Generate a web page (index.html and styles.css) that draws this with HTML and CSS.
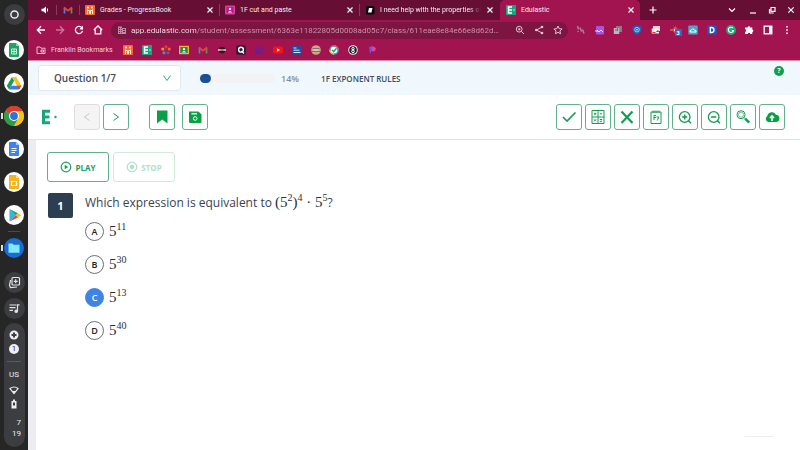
FILE: index.html
```html
<!DOCTYPE html>
<html lang="en">
<head>
<meta charset="utf-8">
<title>Edulastic</title>
<link rel="stylesheet" href="styles.css">
</head>
<body>
<aside class="shelf">
  <button class="launcher" aria-label="Launcher"><svg viewBox="0 0 21 21"><circle cx="10.500" cy="10.500" r="3.600" fill="none" stroke="#eee" stroke-width="1.500"/></svg></button>
  <nav class="apps">
    <a href="#" class="app" aria-label="Sheets"><svg viewBox="0 0 20 20"><circle cx="10" cy="10" r="10" fill="#fff"/><path d="M6 3h6l3 3v10a1 1 0 0 1-1 1H6a1 1 0 0 1-1-1V4a1 1 0 0 1 1-1z" fill="#1da362"/><path d="M12 3l3 3h-3z" fill="#8ed1b1"/><path d="M7.500 9h5v5h-5zM7.500 11.500h5M10 9v5" fill="none" stroke="#d9f2e5"/></svg></a>
    <a href="#" class="app" aria-label="Drive"><svg viewBox="0 0 20 20"><circle cx="10" cy="10" r="10" fill="#fff"/><path d="M8 4l2.200 3.800L5 16.500 2.800 12.800z" fill="#12a15c"/><path d="M8 4h4.300l5 8.700H13z" fill="#fbc116"/><path d="M7.200 12.700h10.100L15 16.500H5z" fill="#3c7bea"/><path d="M13 12.700h4.300L15 16.500z" fill="#e74335"/></svg></a>
    <a href="#" class="app running" aria-label="Chrome"><svg viewBox="0 0 20 20"><circle cx="10" cy="10" r="10" fill="#fbc116"/><path d="M10 10L1.340 5A10 10 0 0 1 18.660 5z" fill="#e33b2e"/><path d="M10 10L1.340 5A10 10 0 0 0 10 20l4-7z" fill="#2a9d4e"/><path d="M10 5h8.660A10 10 0 0 1 10 20l4.300-7.500z" fill="#fbc116"/><circle cx="10" cy="10" r="5" fill="#fff"/><circle cx="10" cy="10" r="3.900" fill="#2f73dc"/></svg></a>
    <a href="#" class="app" aria-label="Docs"><svg viewBox="0 0 20 20"><circle cx="10" cy="10" r="10" fill="#fff"/><path d="M6 3h6l3 3v10a1 1 0 0 1-1 1H6a1 1 0 0 1-1-1V4a1 1 0 0 1 1-1z" fill="#4081ec"/><path d="M12 3l3 3h-3z" fill="#a6c5f8"/><path d="M7.500 9.500h5M7.500 11.500h5M7.500 13.500h3.500" stroke="#fff"/></svg></a>
    <a href="#" class="app" aria-label="Slides"><svg viewBox="0 0 20 20"><circle cx="10" cy="10" r="10" fill="#fff"/><path d="M6 3h6l3 3v10a1 1 0 0 1-1 1H6a1 1 0 0 1-1-1V4a1 1 0 0 1 1-1z" fill="#f2b51b"/><path d="M12 3l3 3h-3z" fill="#fae09a"/><path d="M7.500 9.500h5v4h-5z" fill="none" stroke="#fff" stroke-width="1.200"/></svg></a>
    <a href="#" class="app" aria-label="Play Store"><svg viewBox="0 0 20 20"><circle cx="10" cy="10" r="10" fill="#fff"/><path d="M5.500 4v12.500l6.200-6.200z" fill="#25b8e8"/><path d="M5.500 4l8.500 4.200-2.300 2.100z" fill="#20a565"/><path d="M14 8.200l3.300 2.100-3.300 2.200-2.300-2.200z" fill="#fbc116"/><path d="M5.500 16.500l8.500-4-2.300-2.200z" fill="#e74335"/></svg></a>
    <hr>
    <a href="#" class="app running" aria-label="Files"><svg viewBox="0 0 20 20"><circle cx="10" cy="10" r="10" fill="#1c6ad4"/><path d="M4.500 5.500h4l1.200 1.300h5.800v8h-11z" fill="#7eeafc"/></svg></a>
  </nav>
  <div class="trays">
    <button class="tray" aria-label="Screen captures"><svg viewBox="0 0 21 21" fill="none" stroke="#e4e4e4" stroke-width="1.200"><rect x="8" y="5.500" width="7.500" height="7.500" rx="1"/><path d="M11.700 7.300v4M9.700 9.300h4M6.500 8l-1 5.500 1 2 6.500-.5"/></svg></button>
    <button class="tray" aria-label="Media controls"><svg viewBox="0 0 21 21" fill="none" stroke="#e4e4e4" stroke-width="1.200"><path d="M5.500 7h7M5.500 9.700h6M5.500 12.400h3.500M13.500 13V6.800h2"/><circle cx="12.200" cy="13.200" r="1.200" fill="#e4e4e4"/></svg></button>
  </div>
  <section class="status">
    <svg class="dot" viewBox="0 0 10 10"><circle cx="5" cy="5" r="4.500" fill="#eee"/><path d="M5 2.500v5M2.500 5h5" stroke="#3c3d40" stroke-width="2"/></svg>
    <span class="count">1</span>
    <hr>
    <span class="lang">US</span>
    <svg class="dot" viewBox="0 0 10 10"><path d="M1 3.500q4-3 8 0L5 8.500z" fill="none" stroke="#eee" stroke-width="1.200"/><path d="M3 6h4L5 8.500z" fill="#eee"/></svg>
    <svg class="dot battery" viewBox="0 0 10 10"><path d="M4 .5h2V2h1.500v7.500h-5V2H4z" fill="#eee"/><path d="M4 3.500h2v3H4z" fill="#3c3d40"/></svg>
    <time class="clock"><span>7</span><span>19</span></time>
  </section>
</aside>

<div class="browser">
  <header class="tabs">
    <div class="pinned"><svg class="i10" viewBox="0 0 10 10"><path d="M1.500 3.700h1.700L6 1.500v7L3.200 6.300H1.500z" fill="#fff"/><path d="M7.500 3.500v3" stroke="#fff"/></svg></div>
    <div class="pinned"><svg class="i10" viewBox="0 0 10 10"><path d="M1.500 8.500v-6" stroke="#4285f4" stroke-width="1.700"/><path d="M8.500 8.500v-6" stroke="#34a853" stroke-width="1.700"/><path d="M1 2.500l4 3.200 4-3.200" fill="none" stroke="#ea4335" stroke-width="1.800"/></svg></div>
    <div class="tab"><svg class="i10" viewBox="0 0 10 10"><rect width="10" height="10" rx="1" fill="#f26b2b"/><path d="M2.500 4.500V9M7.500 4.500V9M2 5.500h2.500V9M8 5.500H5.500V9" fill="none" stroke="#ffe9da"/><circle cx="3" cy="2.500" r="1" fill="#fff"/><circle cx="7" cy="2.500" r="1" fill="#fff"/></svg><a href="#">Grades - ProgressBook</a><button class="x" aria-label="Close tab"><svg viewBox="0 0 8 8"><path d="M1.500 1.500l5 5M6.500 1.500l-5 5"/></svg></button></div>
    <div class="tab"><svg class="i10" viewBox="0 0 10 10"><rect y=".5" width="10" height="9" rx="1" fill="#e23ba5"/><rect x="1.500" y="2" width="7" height="6" fill="#b91c7f"/><circle cx="5" cy="4" r="1.200" fill="#fff"/><path d="M2.700 7.500q2.300-3 4.600 0z" fill="#fff"/></svg><a href="#">1F cut and paste</a><button class="x" aria-label="Close tab"><svg viewBox="0 0 8 8"><path d="M1.500 1.500l5 5M6.500 1.500l-5 5"/></svg></button></div>
    <div class="tab"><svg class="i10" viewBox="0 0 10 10"><rect x="1" y="1" width="8.500" height="8.500" rx="1.500" fill="#080808"/><path d="M4 3h3.500l-1 4.500H3z" fill="#fff"/></svg><a href="#" class="fade">I need help with the properties of</a><button class="x" aria-label="Close tab"><svg viewBox="0 0 8 8"><path d="M1.500 1.500l5 5M6.500 1.500l-5 5"/></svg></button></div>
    <div class="tab active"><svg class="i10" viewBox="0 0 10 10"><rect width="10" height="10" fill="#19a57b"/><path d="M6 2H2.500v6H6M2.500 5H6" fill="none" stroke="#fff" stroke-width="1.500"/><circle cx="8" cy="5" r=".7" fill="#fff"/></svg><a href="#">Edulastic</a><button class="x" aria-label="Close tab"><svg viewBox="0 0 8 8"><path d="M1.500 1.500l5 5M6.500 1.500l-5 5"/></svg></button></div>
    <button class="new" aria-label="New tab"><svg viewBox="0 0 10 10"><path d="M5 1.500v7M1.500 5h7"/></svg></button>
    <div class="window">
      <button aria-label="Search tabs"><svg viewBox="0 0 10 10"><path d="M2 3.500l3 3 3-3"/></svg></button>
      <button aria-label="Minimize"><svg viewBox="0 0 10 10"><path d="M2 8h6"/></svg></button>
      <button aria-label="Restore"><svg viewBox="0 0 10 10"><path d="M2.500 4v4h4.200M4 2.500h4v3.800H4z"/></svg></button>
      <button aria-label="Close"><svg viewBox="0 0 10 10"><path d="M2.300 2.300l5.400 5.400M7.700 2.300L2.300 7.700"/></svg></button>
    </div>
  </header>

  <div class="bar">
    <nav class="nav">
      <button aria-label="Back"><svg viewBox="0 0 10 10"><path d="M9 5H1.500M5 1.300L1.300 5 5 8.700"/></svg></button>
      <button class="dim" aria-label="Forward"><svg viewBox="0 0 10 10"><path d="M1 5h7.500M5 1.300L8.700 5 5 8.700"/></svg></button>
      <button aria-label="Reload"><svg viewBox="0 0 10 10"><path d="M8 3a3.600 3.600 0 1 0 .5 2.800"/><path d="M9 .8v3.700H5.300z" fill="#fff" stroke="none"/></svg></button>
      <button aria-label="Home"><svg viewBox="0 0 10 10"><path d="M.8 5L5 1l4.200 4M2.200 4.500v4.400h5.600V4.500"/></svg></button>
    </nav>
    <div class="omnibox">
      <svg class="i10" viewBox="0 0 10 10" fill="#c08aa2"><path d="M1 1.500h4V3h4v6H1zM2 3v1h1V3zm0 2v1h1V5zm0 2v1h1V7zm2-4v1h.7V3zm0 2v1h.7V5zm0 2v1h.7V7zm2-3v1h2V4zm0 2v1h2V6z" fill-rule="evenodd"/></svg>
      <input type="text" aria-label="Address" value="app.edulastic.com/student/assessment/6363e11822805d0008ad05c7/class/611eae8e84e66e8d62d…">
      <div class="page-actions">
        <button aria-label="Zoom"><svg viewBox="0 0 10 10"><circle cx="4.200" cy="4.200" r="2.900"/><path d="M6.400 6.400L9 9M4.200 3v2.400M3 4.200h2.400"/></svg></button>
        <button aria-label="Share"><svg viewBox="0 0 10 10"><path d="M8 2L2.500 5 8 8"/><g fill="#e5c3d0" stroke="none"><circle cx="8" cy="2" r="1.300"/><circle cx="2.300" cy="5" r="1.300"/><circle cx="8" cy="8" r="1.300"/></g></svg></button>
        <button aria-label="Bookmark"><svg viewBox="0 0 10 10"><path d="M5 1l1.200 2.700 2.900.3-2.200 1.900.7 2.900L5 7.300 2.400 8.800l.7-2.900L.9 4l2.900-.3z"/></svg></button>
      </div>
    </div>
    <div class="extensions">
      <svg class="i10" viewBox="0 0 10 10"><path d="M1.500 1l1 3.500M4 2.500l1.500 4M6.500 4.500L8 8.500M1.800 6l.5 1" fill="none" stroke="#a88698" stroke-width="1.500"/></svg>
      <svg class="i10" viewBox="0 0 10 10"><rect x="1" y="1" width="8" height="8.500" rx="1" fill="#a257e3"/><path d="M0 6h3M2 5l2 2 2-2 2 2" fill="none" stroke="#efd9ff"/></svg>
      <svg class="i10" viewBox="0 0 10 10"><path d="M3 1h6v6H3z" fill="#8a7c86"/><path d="M.8 3h5.500v6H.8z" fill="#bdb5bb"/><path d="M2 5h3M4.500 3v3" stroke="#756974"/></svg>
      <svg class="i10" viewBox="0 0 10 10"><path d="M5 .3l4.500 1.500v3Q9 8.500 5 9.800 1 8.500.5 4.800v-3z" fill="#1f5fb4"/><circle cx="5" cy="4.700" r="2.300" fill="none" stroke="#9dccff"/><circle cx="5" cy="4.700" r=".8" fill="#fff"/></svg>
      <svg class="i10" viewBox="0 0 10 10"><path d="M2 1h7v5H2z" fill="#e7d8d2"/><path d="M.7 3.500H8v5H.7z" fill="#f5eeea"/><path d="M1.500 7.500h3" stroke="#d33"/><path d="M5 7l2-2 1 2" fill="#4b4451"/></svg>
      <span class="ext-badge"><svg class="i10" viewBox="0 0 10 10"><path d="M0 4h3l2-3 4 4-4 4-2-3H0z" fill="#e84545"/><path d="M4 3.500l2 1.500-2 1.500z" fill="#fff"/></svg><b>3</b></span>
      <svg class="i10" viewBox="0 0 10 10"><rect x=".3" y=".5" width="9.400" height="9" rx="1" fill="#48a9c5"/><path d="M2 7q-.5-2 1.500-2 1-2.500 3 0Q8.500 5 8 7z" fill="none" stroke="#fff"/></svg>
      <svg class="i10" viewBox="0 0 10 10"><rect x=".3" y=".5" width="9.400" height="9" rx="1" fill="#2055bf"/><path d="M3.300 2.500h1.200a2.500 2.500 0 0 1 0 5H3.300z" fill="none" stroke="#fff" stroke-width="1.300"/></svg>
      <svg class="i10" viewBox="0 0 10 10"><circle cx="5" cy="5" r="4.900" fill="#15b378"/><path d="M7 3.200a2.600 2.600 0 1 0 .5 2.300H5.700" fill="none" stroke="#fff" stroke-width="1.100"/></svg>
      <svg class="i10" viewBox="0 0 10 10"><path d="M1 2.500h2.700a1.300 1.300 0 1 1 2.600 0h2v2a1.400 1.400 0 0 1 0 2.700V9H6.300a1.200 1.200 0 0 0-2.400 0H1V6.700a1.200 1.200 0 0 0 0-2.400z" fill="#fff"/></svg>
      <svg class="i10" viewBox="0 0 10 10"><rect x="1.200" y="1.200" width="7.600" height="7.600" fill="none" stroke="#fff" stroke-width="1.300"/><path d="M6 1h3v8H6z" fill="#fff"/></svg>
      <svg class="i10" viewBox="0 0 10 10" fill="#f2dbe4"><circle cx="5" cy="1.700" r="1"/><circle cx="5" cy="5" r="1"/><circle cx="5" cy="8.300" r="1"/></svg>
    </div>
  </div>

  <nav class="bookmarks">
    <a href="#" class="folder"><svg class="i10" viewBox="0 0 10 10" fill="none" stroke="#e8c3d1"><path d="M1 2h3l1 1.200h4v5.300H1z"/><path d="M5 5h2.500v2H5z"/></svg>Franklin Bookmarks</a>
    <div class="marks">
      <svg class="i10" viewBox="0 0 10 10"><rect width="10" height="10" rx="1" fill="#f26b2b"/><path d="M2.500 4.500V9M7.500 4.500V9M2 5.500h2.500V9M8 5.500H5.500V9" fill="none" stroke="#ffe9da"/><circle cx="3" cy="2.500" r="1" fill="#fff"/><circle cx="7" cy="2.500" r="1" fill="#fff"/></svg>
      <svg class="i10" viewBox="0 0 10 10"><rect width="10" height="10" fill="#19a57b"/><path d="M6 2H2.500v6H6M2.500 5H6" fill="none" stroke="#fff" stroke-width="1.500"/><circle cx="8" cy="5" r=".7" fill="#fff"/></svg>
      <svg class="i10" viewBox="0 0 10 10"><circle cx="5" cy="1.800" r="1.600" fill="#e63b2d"/><circle cx="1.800" cy="4" r="1.600" fill="#f39a1e"/><circle cx="8.200" cy="4" r="1.600" fill="#ef6b29"/><circle cx="3" cy="7.800" r="1.600" fill="#4c8bd8"/><circle cx="7" cy="7.800" r="1.600" fill="#70579f"/><circle cx="5" cy="5" r="1.200" fill="#8d3158"/></svg>
      <svg class="i10" viewBox="0 0 10 10"><rect y=".8" width="10" height="8.400" fill="#f2b51b"/><rect x="1.300" y="2" width="7.400" height="6" fill="#23895a"/><circle cx="5" cy="4.200" r="1.100" fill="#fff"/><path d="M2.800 7.500q2.200-3 4.400 0z" fill="#fff"/></svg>
      <svg class="i10" viewBox="0 0 10 10"><path d="M1.500 8.500v-6" stroke="#4285f4" stroke-width="1.700"/><path d="M8.500 8.500v-6" stroke="#34a853" stroke-width="1.700"/><path d="M1 2.500l4 3.200 4-3.200" fill="none" stroke="#ea4335" stroke-width="1.800"/></svg>
      <svg class="i10" viewBox="0 0 10 10"><circle cx="5" cy="5" r="3.300" fill="#241b20"/><path d="M1 5h8" stroke="#ead6dc" stroke-width="1.500"/><path d="M3.500 5h3" stroke="#d94c3d" stroke-width="1.500"/></svg>
      <svg class="i10" viewBox="0 0 10 10"><rect x=".3" y=".3" width="9.400" height="9.400" rx="1.500" fill="#2d1735"/><circle cx="5" cy="4.700" r="2.400" fill="none" stroke="#fff" stroke-width="1.400"/><path d="M5.500 6l2.500 2.500" stroke="#fff" stroke-width="1.200"/></svg>
      <svg class="i10" viewBox="0 0 10 10"><path d="M1.800 1.500v7.500M5.800 3.500L2.500 6 6 9M8.500 1.500L8 6.700M7.600 7.700v1.500" fill="none" stroke="#5c1fae" stroke-width="1.700"/></svg>
      <svg class="i10" viewBox="0 0 10 10"><rect y="1.500" width="10" height="7" rx="2" fill="#f41414"/><path d="M4 3.300L7 5 4 6.700z" fill="#fff"/></svg>
      <svg class="i10" viewBox="0 0 10 10"><path d="M.3.300h9.400v9.400H.3z" fill="#174ea6"/><path d="M1.500 3h3M1.500 5.200h6M1.500 7.500h7" stroke="#d7e4ff"/></svg>
      <svg class="i10" viewBox="0 0 10 10"><circle cx="5" cy="5" r="4.800" fill="#c9a884"/><path d="M1.500 3.500h7M1 6.500h8" stroke="#806d76"/><path d="M2.500 5h5" stroke="#efe1c7"/></svg>
      <svg class="i10" viewBox="0 0 10 10"><circle cx="5" cy="5" r="4" fill="#fff" stroke="#36a9d9" stroke-width="1.500"/><path d="M5 1a4 4 0 0 1 4 4" fill="none" stroke="#ef6548" stroke-width="1.500"/><path d="M1 5a4 4 0 0 0 4 4" fill="none" stroke="#f4bd35" stroke-width="1.500"/><path d="M3 5l1.700 1.600L7.500 3.300" fill="none" stroke="#23a867" stroke-width="1.500"/></svg>
      <svg class="i10" viewBox="0 0 10 10"><circle cx="5" cy="5" r="4.800" fill="#eee"/><circle cx="5" cy="5" r="3.800" fill="#222"/><circle cx="5" cy="3.700" r="1.200" fill="none" stroke="#fff"/><circle cx="5" cy="6.300" r="1.300" fill="none" stroke="#fff"/></svg>
      <svg class="i10" viewBox="0 0 10 10"><path d="M2 2l3-1v4l-2 4z" fill="#5b5ddc"/><path d="M5 1l4 2-1 3-3 .5z" fill="#db45a4"/></svg>
    </div>
  </nav>

  <main class="page">
    <header class="head">
      <select aria-label="Question"><option>Question 1/7</option></select>
      <div class="meter"><span></span></div>
      <span class="pct">14%</span>
      <h1>1F EXPONENT RULES</h1>
      <button class="help" aria-label="Help">?</button>
    </header>

    <div class="tools">
      <svg class="logo" viewBox="0 0 16 16"><path d="M9 2.200H2.500v11.600H9M2.500 8h6" fill="none" stroke="#19a57b" stroke-width="3"/><circle cx="14.500" cy="8" r="1.200" fill="#19a57b"/></svg>
      <div class="pair">
        <button class="tool" disabled aria-label="Previous"><svg viewBox="0 0 16 16"><path d="M10.500 4.500L5.500 8l5 3.500"/></svg></button>
        <button class="tool" aria-label="Next"><svg viewBox="0 0 16 16"><path d="M5.500 4.500l5 3.500-5 3.500"/></svg></button>
      </div>
      <div class="pair wide">
        <button class="tool" aria-label="Bookmark question"><svg viewBox="0 0 16 16"><path d="M3 1.500h10.500v13L8.200 10.500 3 14.500z" class="solid"/></svg></button>
        <button class="tool" aria-label="Save"><svg viewBox="0 0 16 16"><path d="M2 2.500h9.500l3 3V13a1 1 0 0 1-1 1H3a1 1 0 0 1-1-1z" class="solid"/><path d="M4.500 4.700h5.500" stroke="#fff" stroke-width="1.500"/><circle cx="8.200" cy="9.500" r="1.800" stroke="#fff"/></svg></button>
      </div>
      <div class="pair right">
        <button class="tool" aria-label="Check answer"><svg viewBox="0 0 16 16"><path d="M2 8l4 4 8.500-8.500" stroke-width="1.600"/></svg></button>
        <button class="tool" aria-label="Calculator"><svg viewBox="0 0 16 16"><path d="M2 1.500h12v13H2zM8 1.500v13M2 8h12M4 4.800h2.300M9.800 4.800h2.300M5 3.700v2.200M4 10.300l2 2M6 10.300l-2 2M9.800 10.500h2.300M9.800 12.300h2.300"/></svg></button>
        <button class="tool" aria-label="Cross out"><svg viewBox="0 0 16 16"><path d="M2.500 2.500l11 11.500M13.500 2.500L2.500 14" stroke-width="2.200"/></svg></button>
        <button class="tool" aria-label="Scratchpad"><svg viewBox="0 0 16 16"><path d="M3 3h10v11.500H3zM5 1.500v2.500M7 1.500v2.500M9 1.500v2.500M11 1.500v2.500M6 11V6.500h2M6 8.500h2M8.500 8h2.300l-1.500 3.500"/></svg></button>
        <button class="tool" aria-label="Zoom in"><svg viewBox="0 0 16 16"><circle cx="7.700" cy="8" r="5.300" stroke-width="1.300"/><path d="M11.500 11.800l2.500 2.500M7.700 5.400v5.200M5.100 8h5.200" stroke-width="1.500"/></svg></button>
        <button class="tool" aria-label="Zoom out"><svg viewBox="0 0 16 16"><circle cx="7.700" cy="8" r="5.300" stroke-width="1.300"/><path d="M11.500 11.800l2.500 2.500M5.100 8h5.200" stroke-width="1.500"/></svg></button>
        <button class="tool" aria-label="Magnify"><svg viewBox="0 0 16 16"><circle cx="6" cy="5.700" r="4"/><circle cx="6" cy="5.700" r="2.500" stroke-width=".6"/><path d="M9 8.500l1.500 1.500" /><path d="M10.200 9.700l4 4" stroke-width="2.500"/></svg></button>
        <button class="tool" aria-label="Upload"><svg viewBox="0 0 16 16"><path d="M4.500 13A3.300 3.300 0 0 1 3.300 7 4.700 4.700 0 0 1 12 5.700a3.700 3.700 0 0 1 .5 7.300z" class="solid"/><path d="M8 12V7.500M5.900 9L8 6.800 10.100 9" stroke="#fff" stroke-width="1.500"/></svg></button>
      </div>
    </div>

    <section class="sheet">
      <div class="speech">
        <button><svg viewBox="0 0 12 12"><circle cx="6" cy="6" r="4.800" fill="none" stroke="currentColor" stroke-width="1.200"/><path d="M4.700 3.800L8.300 6 4.700 8.200z" fill="currentColor"/></svg>PLAY</button>
        <button disabled><svg viewBox="0 0 12 12"><circle cx="6" cy="6" r="4.800" fill="none" stroke="currentColor" stroke-width="1.200"/><circle cx="6" cy="6" r="2.200" fill="currentColor"/></svg>STOP</button>
      </div>
      <div class="question">
        <span class="num">1</span>
        <fieldset>
          <legend>Which expression is equivalent to <span class="math">(5<sup>2</sup>)<sup>4</sup> · 5<sup>5</sup></span>?</legend>
          <label><span class="mark"><input type="radio" name="answer"><i>A</i></span><span class="math">5<sup>11</sup></span></label>
          <label><span class="mark"><input type="radio" name="answer"><i>B</i></span><span class="math">5<sup>30</sup></span></label>
          <label><span class="mark"><input type="radio" name="answer" checked><i>C</i></span><span class="math">5<sup>13</sup></span></label>
          <label><span class="mark"><input type="radio" name="answer"><i>D</i></span><span class="math">5<sup>40</sup></span></label>
        </fieldset>
      </div>
      <hr class="foot">
    </section>
  </main>
</div>
</body>
</html>
```

FILE: styles.css
```css
* { box-sizing: border-box; }
body {
  margin: 0;
  display: flex;
  min-height: 100vh;
  font-family: Roboto, "Liberation Sans", sans-serif;
  background: #fff;
}
button { margin: 0; padding: 0; border: 0; background: none; font: inherit; color: inherit; }
svg { display: block; flex: none; }
a { color: inherit; text-decoration: none; }
hr { margin: 0; border: 0; }
.i10 { width: 10px; height: 10px; }

/* Shelf */
.shelf {
  flex: 0 0 28px;
  display: flex;
  flex-direction: column;
  align-items: center;
  padding: 4px 0 3px;
  background: #262626;
  color: #eee;
}
.launcher, .tray { width: 21px; height: 21px; border-radius: 50%; background: #3c3d40; }
.apps { display: flex; flex-direction: column; gap: 13px; margin-top: 15px; }
.app { width: 20px; height: 20px; position: relative; }
.running::before {
  content: "";
  position: absolute;
  left: -3px;
  top: 7px;
  width: 2px;
  height: 6px;
  background: #ddd;
}
.apps hr { width: 12px; height: 1px; margin: -7px auto; background: #4a4a4a; }
.trays { display: flex; flex-direction: column; gap: 5px; margin-top: 14px; }
.status {
  flex: 1;
  width: 21px;
  margin-top: 4px;
  padding: 7px 0 5px;
  display: flex;
  flex-direction: column;
  align-items: center;
  gap: 4px;
  border-radius: 11px;
  background: #3c3d40;
}
.dot { width: 10px; height: 10px; }
.count {
  width: 10px;
  height: 10px;
  border-radius: 50%;
  background: #eee;
  color: #333;
  font-size: 8px;
  line-height: 10px;
  text-align: center;
}
.status hr { width: 14px; height: 1px; margin: 3px 0; background: #5b5c5f; }
.lang { font-size: 8px; line-height: 12px; }
.clock {
  display: flex;
  flex-direction: column;
  width: 14px;
  margin-top: 4px;
  font-size: 8px;
  line-height: 11px;
  text-align: right;
}

/* Browser frame */
.browser { flex: 1; min-width: 0; display: flex; flex-direction: column; }
.tabs {
  display: flex;
  align-items: center;
  height: 20px;
  padding-left: 6px;
  background: #660e33;
  color: #f8ecf1;
  font-size: 7px;
}
.pinned { padding: 0 6px; border-right: 1px solid #8c3a5d; }
.tab {
  flex: 0 0 140px;
  min-width: 0;
  display: flex;
  align-items: center;
  gap: 5px;
  height: 12px;
  padding: 0 5px;
  border-right: 1px solid #8c3a5d;
}
.tab a { flex: 1; min-width: 0; overflow: hidden; white-space: nowrap; }
.tab:nth-last-child(4) { border-right-color: transparent; }
.tab .fade { mask-image: linear-gradient(90deg, #000 88%, transparent); }
.active {
  height: 20px;
  padding: 0 5px 0 6px;
  border: 0;
  border-radius: 5px 5px 0 0;
  background: #a1144f;
}
.x { flex: none; width: 8px; height: 8px; }
.x svg, .new svg, .window svg { width: 100%; fill: none; stroke: #fff; stroke-width: 1.2; }
.new { width: 10px; margin-left: 8px; }
.window { display: flex; gap: 9px; margin-left: auto; padding-right: 4px; }
.window button { width: 10px; }
.window button:first-child { margin-right: 2px; }

.bar {
  display: flex;
  align-items: center;
  height: 20px;
  padding: 0 8px;
  background: #a1144f;
}
.nav { display: flex; gap: 9px; }
.nav button, .page-actions button { width: 10px; }
.nav svg { fill: none; stroke: #fff; stroke-width: 1.3; }
.nav .dim svg { stroke: #cf7398; }
.omnibox {
  flex: 1;
  min-width: 0;
  display: flex;
  align-items: center;
  height: 17px;
  margin: 0 8px;
  padding: 0 5px 0 6px;
  border-radius: 9px;
  background: #7c1542;
}
.omnibox input {
  flex: 1;
  min-width: 0;
  margin: 0 7px 0 4px;
  padding: 0;
  border: 0;
  font: 8px Roboto, "Liberation Sans", sans-serif;
  color: transparent;
  background: linear-gradient(90deg, #fbeef3 66px, #d199b0 66px) text;
}
.page-actions { display: flex; gap: 9px; }
.page-actions svg { fill: none; stroke: #e5c3d0; }
.extensions { flex: 0 0 216px; display: flex; justify-content: space-between; }
.ext-badge { position: relative; }
.ext-badge b {
  position: absolute;
  left: 5px;
  top: 4px;
  width: 7px;
  height: 7px;
  background: #2469cc;
  color: #fff;
  font-size: 6px;
  line-height: 7px;
  text-align: center;
}
.bookmarks {
  display: flex;
  align-items: center;
  height: 21px;
  padding: 0 8px;
  border-bottom: 1px solid #d58aa9;
  background: #a1144f;
  color: #f0d3de;
  font-size: 7px;
}
.folder { flex: 0 0 87px; display: flex; align-items: center; gap: 5px; white-space: nowrap; }
.marks { flex: 0 0 254px; display: flex; justify-content: space-between; }

/* Assessment page */
.page { flex: 1; display: flex; flex-direction: column; font-family: "Open Sans", "Noto Sans", sans-serif; color: #434b5d; }
.head {
  display: flex;
  align-items: center;
  height: 34px;
  padding: 0 16px 0 10px;
  background: #f0f8fd;
}
.head select {
  appearance: none;
  flex: 0 0 143px;
  height: 26px;
  padding: 0 15px;
  border: 1px solid #e3e8ec;
  border-radius: 3px;
  background: #fff url("data:image/svg+xml,%3Csvg xmlns='http://www.w3.org/2000/svg' viewBox='0 0 10 10'%3E%3Cpath d='M1.500 2.500L5 7.500l3.500-5' fill='none' stroke='%232fa584'/%3E%3C/svg%3E") no-repeat right 8px center / 10px;
  color: #434b5d;
  font: 600 10px "Open Sans", sans-serif;
}
.meter { flex: 0 0 76px; height: 9px; margin-left: 19px; border-radius: 5px; background: #f3f3f5; }
.meter span { display: block; width: 11px; height: 9px; border-radius: 5px; background: #1b4f93; }
.pct { margin-left: 5px; color: #888e97; font-size: 9px; font-weight: 600; }
.head h1 { margin: 0 0 0 22px; font-size: 8px; font-weight: 600; }
.help {
  align-self: flex-start;
  width: 10px;
  height: 10px;
  margin: 5px 0 0 auto;
  border-radius: 50%;
  background: #0ea04d;
  color: #fff;
  font-size: 7px;
  font-weight: 700;
  line-height: 10px;
}
.tools {
  display: flex;
  align-items: center;
  height: 45px;
  padding: 0 15px 0 12px;
  border-bottom: 1px solid #e2e3e5;
}
.logo { width: 18px; height: 16px; }
.pair { display: flex; gap: 3px; margin-left: 16px; }
.wide { gap: 7px; margin-left: 20px; }
.right { margin-left: auto; }
.tool {
  display: grid;
  place-items: center;
  width: 26px;
  height: 26px;
  border: 1px solid #62b08c;
  border-radius: 3px;
  color: #149c53;
}
.tool svg { width: 16px; fill: none; stroke: currentColor; }
.tool .solid { fill: #08a045; stroke: none; }
.tool:disabled { border-color: #dedede; background: #f4f4f4; color: #c8c8c8; }
.sheet {
  flex: 1;
  display: flex;
  flex-direction: column;
  padding: 12px 26px 13px 11px;
  border-left: 8px solid #ededf1;
  background: #fff;
}
.speech { display: flex; gap: 4px; }
.speech button {
  display: flex;
  align-items: center;
  justify-content: center;
  gap: 3px;
  width: 62px;
  height: 30px;
  border: 1px solid #5db289;
  border-radius: 3px;
  color: #229d5e;
  font-size: 8px;
  font-weight: 700;
}
.speech svg { width: 12px; }
.speech button:disabled { border-color: #cfeadb; color: #b3dfc7; }
.question { display: flex; gap: 12px; margin: 11px 0 auto; }
.num {
  flex: none;
  width: 25px;
  height: 25px;
  margin-left: 1px;
  border-radius: 2px;
  background: #2d3e50;
  color: #fff;
  font-size: 11px;
  font-weight: 700;
  line-height: 25px;
  text-align: center;
}
fieldset { min-width: 0; margin: 0; padding: 0; border: 0; color: #3b4252; }
legend { padding: 0; font-size: 12px; line-height: 18px; }
.math { font-family: "Liberation Serif", serif; font-size: 15px; color: #2b2f35; }
.math sup { font-size: 10px; line-height: 0; vertical-align: 6px; }
label { display: flex; align-items: center; gap: 5px; height: 19px; margin-bottom: 14px; }
legend + label { margin-top: 10px; }
.mark { display: grid; place-items: center; width: 19px; height: 19px; }
.mark input, .mark i { grid-area: 1 / 1; }
.mark input {
  appearance: none;
  width: 19px;
  height: 19px;
  margin: 0;
  border: 1px solid #6b6f78;
  border-radius: 50%;
}
.mark i { color: #222; font-size: 9px; font-style: normal; font-weight: 600; }
.mark input:checked { border-color: #3f84e5; background: #3f84e5; }
.mark input:checked + i { color: #fff; }
.foot { width: 29px; height: 1px; margin-left: auto; background: #eee; }
```
